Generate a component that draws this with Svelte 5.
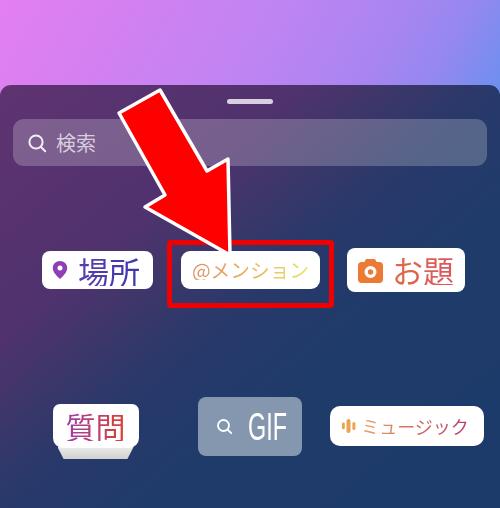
<script lang="ts">
  const font = '"Noto Sans CJK JP"';
</script>

<div class="screen" style="font-family: {font}, sans-serif">
  <div class="sheet">
    <div class="handle"></div>
    <div class="search">
      <svg width="20" height="20" viewBox="0 0 20 20" fill="none" stroke="#f4eef6" stroke-width="2" aria-hidden="true">
        <circle cx="9" cy="9" r="6.6" />
        <path d="M13.8 13.8l4.4 4.4" stroke-linecap="round" />
      </svg>
      <span>検索</span>
    </div>

    <div class="row row-one">
      <div class="sticker place">
        <svg width="16" height="20" viewBox="0 0 16 20" aria-hidden="true">
          <path fill-rule="evenodd" fill="#8e3fb5" d="M8 1C3.900 1 .8 4.100.8 8c0 4.600 4.700 8.700 7.200 11 2.500-2.300 7.200-6.400 7.200-11C15.200 4.100 12.100 1 8 1zm0 4.600a2.500 2.500 0 1 1 0 5 2.500 2.500 0 0 1 0-5z" />
        </svg>
        <span class="label">場所</span>
      </div>
      <div class="sticker mention">
        <span class="label">@メンション</span>
      </div>
      <div class="sticker topic">
        <svg width="25" height="25" viewBox="0 0 25 25" aria-hidden="true">
          <path fill-rule="evenodd" fill="#ec7a35" d="M9 1h7c.8 0 1.300.4 1.600 1l1 2h2.900C23.500 4 25 5.500 25 7.500v14c0 2-1.500 3.500-3.500 3.500h-18C1.500 25 0 23.500 0 21.500v-14C0 5.500 1.500 4 3.500 4h2.900l1-2C7.700 1.400 8.200 1 9 1zm3.500 7a6 6 0 1 0 0 12 6 6 0 0 0 0-12zm0 3.300a2.700 2.700 0 1 1 0 5.400 2.700 2.700 0 0 1 0-5.400z" />
        </svg>
        <span class="label">お題</span>
      </div>
    </div>

    <div class="row row-two">
      <div class="question">
        <div class="sticker ask"><span class="label">質問</span></div>
        <div class="stack"></div>
      </div>
      <div class="sticker gif">
        <svg width="17" height="17" viewBox="0 0 17 17" fill="none" stroke="#fff" stroke-width="1.800" aria-hidden="true">
          <circle cx="7.500" cy="7.500" r="5.500" />
          <path d="M11.600 11.600l3.600 3.600" stroke-linecap="round" />
        </svg>
        <span class="label">GIF</span>
      </div>
      <div class="sticker music">
        <svg width="14" height="14" viewBox="0 0 14 14" fill="#eda24f" aria-hidden="true">
          <rect x="0" y="3.500" width="2.800" height="7" rx="1.400" />
          <rect x="4.500" y="0" width="4" height="14" rx="2" />
          <rect x="10.400" y="3" width="3" height="8" rx="1.500" />
        </svg>
        <span class="label">ミュージック</span>
      </div>
    </div>
  </div>

  <div class="highlight"></div>
  <svg class="arrow" width="500" height="508" viewBox="0 0 500 508" aria-hidden="true">
    <path d="M160 90 L119 113 L165 195 L145 207 L230 255 L228 159 L207 171 Z" fill="#ff0000" stroke="#fff" stroke-width="3.500" stroke-linejoin="round" />
  </svg>
</div>

<style>
  :global(body) {
    margin: 0;
  }

  .screen {
    position: relative;
    width: 500px;
    height: 508px;
    overflow: hidden;
    padding-top: 85px;
    box-sizing: border-box;
    background: linear-gradient(120deg, #e47ff0 0%, #d480f1 22%, #c084f2 50%, #a985f2 73%, #9488ee 86%, #6a90f0 100%) 0 0 / 500px 98px no-repeat;
  }

  .sheet {
    height: 423px;
    border-radius: 11px 11px 0 0;
    background: linear-gradient(to bottom right, #5e3370 0%, #50326e 30%, #40366a 38%, #28396a 50%, #1f3b6a 65%, #1c3b6a 100%);
    padding-top: 14px;
    box-sizing: border-box;
  }

  .handle {
    width: 46px;
    height: 5px;
    border-radius: 3px;
    margin: 0 auto 15px;
    background: #d8d0e0;
  }

  .search {
    display: flex;
    align-items: center;
    gap: 9px;
    height: 47px;
    margin: 0 13px;
    padding-left: 14px;
    border-radius: 11px;
    background: rgba(255, 255, 255, 0.22);
    color: #d8cede;
    font-size: 20px;
  }

  .row {
    display: flex;
    align-items: center;
    height: 60px;
  }

  .row-one {
    margin-top: 74px;
    padding-left: 42px;
    gap: 28px;
  }

  .row-two {
    margin-top: 96px;
    padding-left: 53px;
  }

  .sticker {
    display: flex;
    align-items: center;
    justify-content: center;
    box-sizing: border-box;
    background: #fff;
    border-radius: 8px;
  }

  .sticker svg {
    flex-shrink: 0;
  }

  .label {
    background-clip: text;
    -webkit-background-clip: text;
    color: transparent;
    line-height: 1;
    white-space: nowrap;
  }

  .place {
    width: 111px;
    height: 38px;
    gap: 10px;
    padding-right: 3px;
  }

  .place .label {
    font-size: 31px;
    background-image: linear-gradient(90deg, #5b3fae, #3a37ad);
  }

  .mention {
    width: 139px;
    height: 38px;
    border-radius: 9px;
  }

  .mention .label {
    font-size: 19.700px;
    background-image: linear-gradient(90deg, #df8f68, #e8b85c 55%, #eae36e);
  }

  .topic {
    width: 118px;
    height: 44px;
    gap: 9px;
    margin-left: -1px;
  }

  .topic .label {
    font-size: 31px;
    background-image: linear-gradient(90deg, #e26a48, #d9565e);
    margin-top: -2px;
  }

  .question {
    width: 85px;
    margin-top: 11px;
    display: flex;
    flex-direction: column;
    align-items: center;
  }

  .ask {
    width: 86px;
    height: 44px;
    border-radius: 7px 7px 10px 10px;
    position: relative;
    z-index: 1;
  }

  .ask .label {
    font-size: 30px;
    background-image: linear-gradient(90deg, #a03aa8, #c3415e 60%, #db3f2d);
  }

  .stack {
    width: 76px;
    height: 12px;
    margin-top: -1px;
    clip-path: polygon(0 0, 100% 0, 92% 100%, 8% 100%);
    background: linear-gradient(#ececea, #d0d0ce);
  }

  .gif {
    width: 104px;
    height: 59px;
    margin-left: 60px;
    padding-left: 18px;
    gap: 15px;
    justify-content: flex-start;
    background: #8597af;
  }

  .gif .label {
    color: #fff;
    font-family: "Liberation Sans", sans-serif;
    font-size: 39px;
    transform: scaleX(0.6);
    transform-origin: left center;
    margin-right: -26px;
  }

  .music {
    width: 154px;
    height: 40px;
    margin-left: 28px;
    gap: 5px;
    padding-right: 3px;
    border-radius: 10px;
  }

  .music .label {
    font-size: 18px;
    background-image: linear-gradient(90deg, #e8a265, #d9755f 40%, #b63e72);
  }

  .highlight {
    position: absolute;
    left: 167px;
    top: 240px;
    width: 167px;
    height: 68px;
    box-sizing: border-box;
    border: 5px solid #f00000;
    border-radius: 4px;
  }

  .arrow {
    position: absolute;
    left: 0;
    top: 0;
  }
</style>
